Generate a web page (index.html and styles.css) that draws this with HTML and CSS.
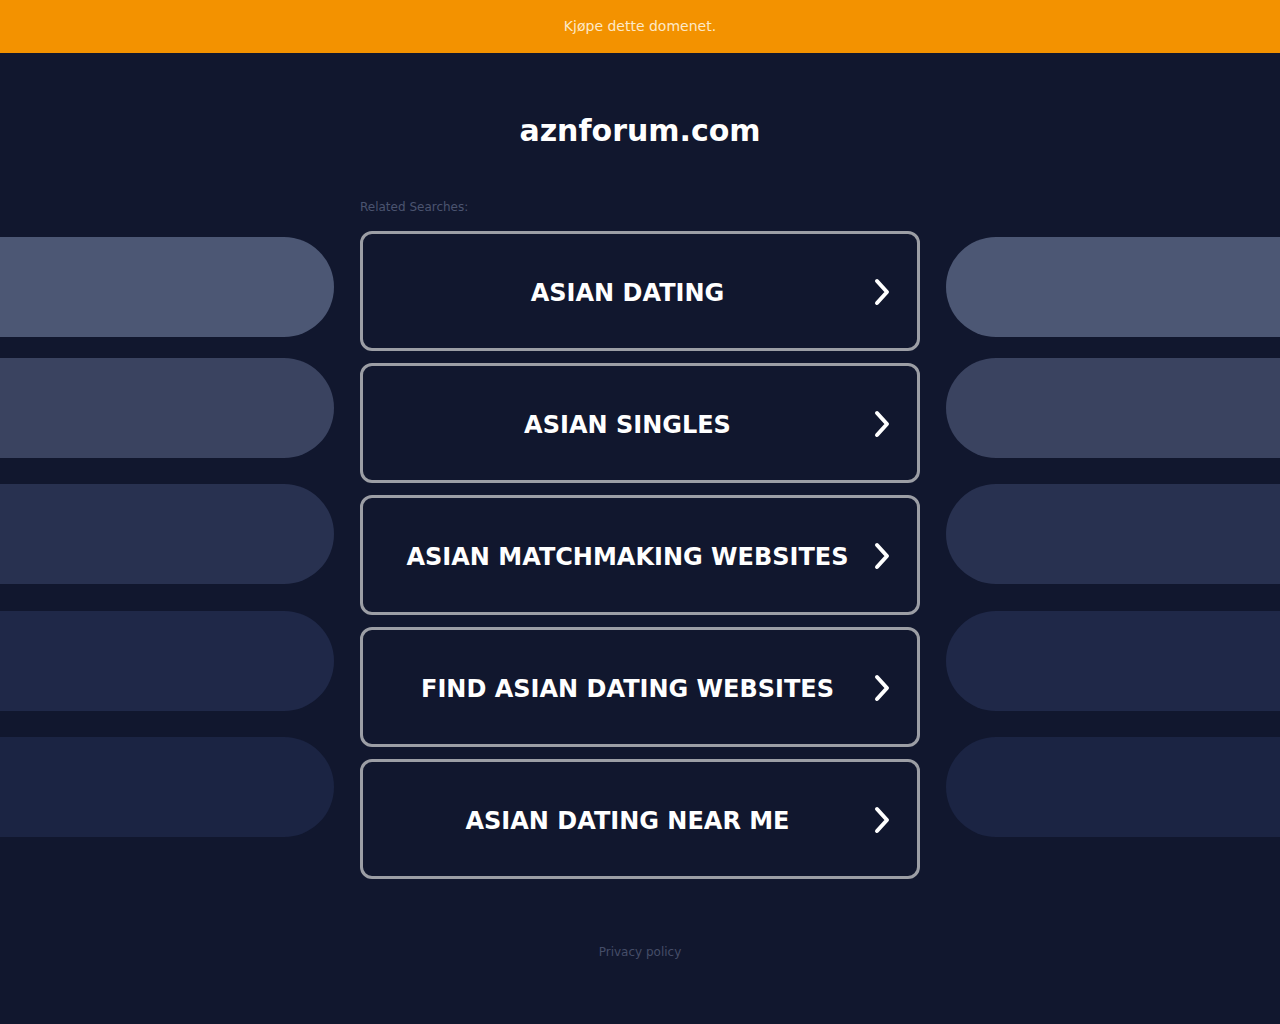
FILE: index.html
```html
<!DOCTYPE html>
<html lang="no">
<head>
<meta charset="utf-8">
<title>aznforum.com</title>
<link rel="stylesheet" href="styles.css">
</head>
<body>
<div class="topbar">Kjøpe dette domenet.</div>
<h1 class="domain">aznforum.com</h1>
<div class="layout">
  <div class="pills pills-left">
    <div class="pill p1"></div>
    <div class="pill p2"></div>
    <div class="pill p3"></div>
    <div class="pill p4"></div>
    <div class="pill p5"></div>
  </div>
  <div class="center">
    <div class="related">Related Searches:</div>
    <div class="links">
      <a class="link" href="#"><span class="label">ASIAN DATING</span><svg class="chev" viewBox="0 0 20 30" width="20" height="30"><path d="M5 4 L15 15 L5 26" fill="none" stroke="#fff" stroke-width="4" stroke-linecap="round" stroke-linejoin="round"/></svg></a>
      <a class="link" href="#"><span class="label">ASIAN SINGLES</span><svg class="chev" viewBox="0 0 20 30" width="20" height="30"><path d="M5 4 L15 15 L5 26" fill="none" stroke="#fff" stroke-width="4" stroke-linecap="round" stroke-linejoin="round"/></svg></a>
      <a class="link" href="#"><span class="label">ASIAN MATCHMAKING WEBSITES</span><svg class="chev" viewBox="0 0 20 30" width="20" height="30"><path d="M5 4 L15 15 L5 26" fill="none" stroke="#fff" stroke-width="4" stroke-linecap="round" stroke-linejoin="round"/></svg></a>
      <a class="link" href="#"><span class="label">FIND ASIAN DATING WEBSITES</span><svg class="chev" viewBox="0 0 20 30" width="20" height="30"><path d="M5 4 L15 15 L5 26" fill="none" stroke="#fff" stroke-width="4" stroke-linecap="round" stroke-linejoin="round"/></svg></a>
      <a class="link" href="#"><span class="label">ASIAN DATING NEAR ME</span><svg class="chev" viewBox="0 0 20 30" width="20" height="30"><path d="M5 4 L15 15 L5 26" fill="none" stroke="#fff" stroke-width="4" stroke-linecap="round" stroke-linejoin="round"/></svg></a>
    </div>
  </div>
  <div class="pills pills-right">
    <div class="pill p1"></div>
    <div class="pill p2"></div>
    <div class="pill p3"></div>
    <div class="pill p4"></div>
    <div class="pill p5"></div>
  </div>
</div>
<div class="footer"><a href="#">Privacy policy</a></div>
</body>
</html>
```

FILE: styles.css
```css
html, body {
  margin: 0;
  padding: 0;
}
body {
  background: #11172e;
  font-family: "DejaVu Sans", Verdana, sans-serif;
  min-height: 1024px;
}
.topbar {
  box-sizing: border-box;
  height: 53px;
  padding-bottom: 1px;
  background: #f39200;
  color: #fde9c8;
  font-size: 14px;
  display: flex;
  align-items: center;
  justify-content: center;
}
.domain {
  margin: 0;
  padding-top: 60px;
  height: 56px;
  text-align: center;
  color: #ffffff;
  font-size: 30px;
  font-weight: bold;
  line-height: 36px;
}
.layout {
  display: flex;
  justify-content: space-between;
  margin-top: 30px;
}
.pills {
  width: 334px;
  display: flex;
  flex-direction: column;
  padding-top: 38px;
}
.pill {
  height: 100px;
}
.pills-left .pill {
  border-radius: 0 50px 50px 0;
}
.pills-right .pill {
  border-radius: 50px 0 0 50px;
}
.p2 { margin-top: 21px; }
.p3 { margin-top: 26px; }
.p4 { margin-top: 27px; }
.p5 { margin-top: 26px; }
.p1 { background: #4c5774; }
.p2 { background: #3a4360; }
.p3 { background: #283150; }
.p4 { background: #1f2848; }
.p5 { background: #1b2443; }
.center {
  width: 560px;
}
.related {
  color: #4b5470;
  font-size: 12px;
  height: 16px;
  line-height: 16px;
  margin-top: 0;
  margin-bottom: 16px;
}
.links {
  display: flex;
  flex-direction: column;
  gap: 12px;
}
.link {
  box-sizing: border-box;
  height: 120px;
  border: 3px solid #9c9ea5;
  border-radius: 12px;
  display: flex;
  align-items: center;
  padding: 2px 25px 0 20px;
  text-decoration: none;
}
.label {
  flex: 1;
  text-align: center;
  color: #ffffff;
  font-size: 24px;
  font-weight: bold;
  letter-spacing: 0;
  padding-top: 2px;
}
.chev {
  flex: none;
  display: block;
}
.footer {
  text-align: center;
  margin-top: 66px;
  font-size: 12px;
}
.footer a {
  color: #454d68;
  text-decoration: none;
}
```
